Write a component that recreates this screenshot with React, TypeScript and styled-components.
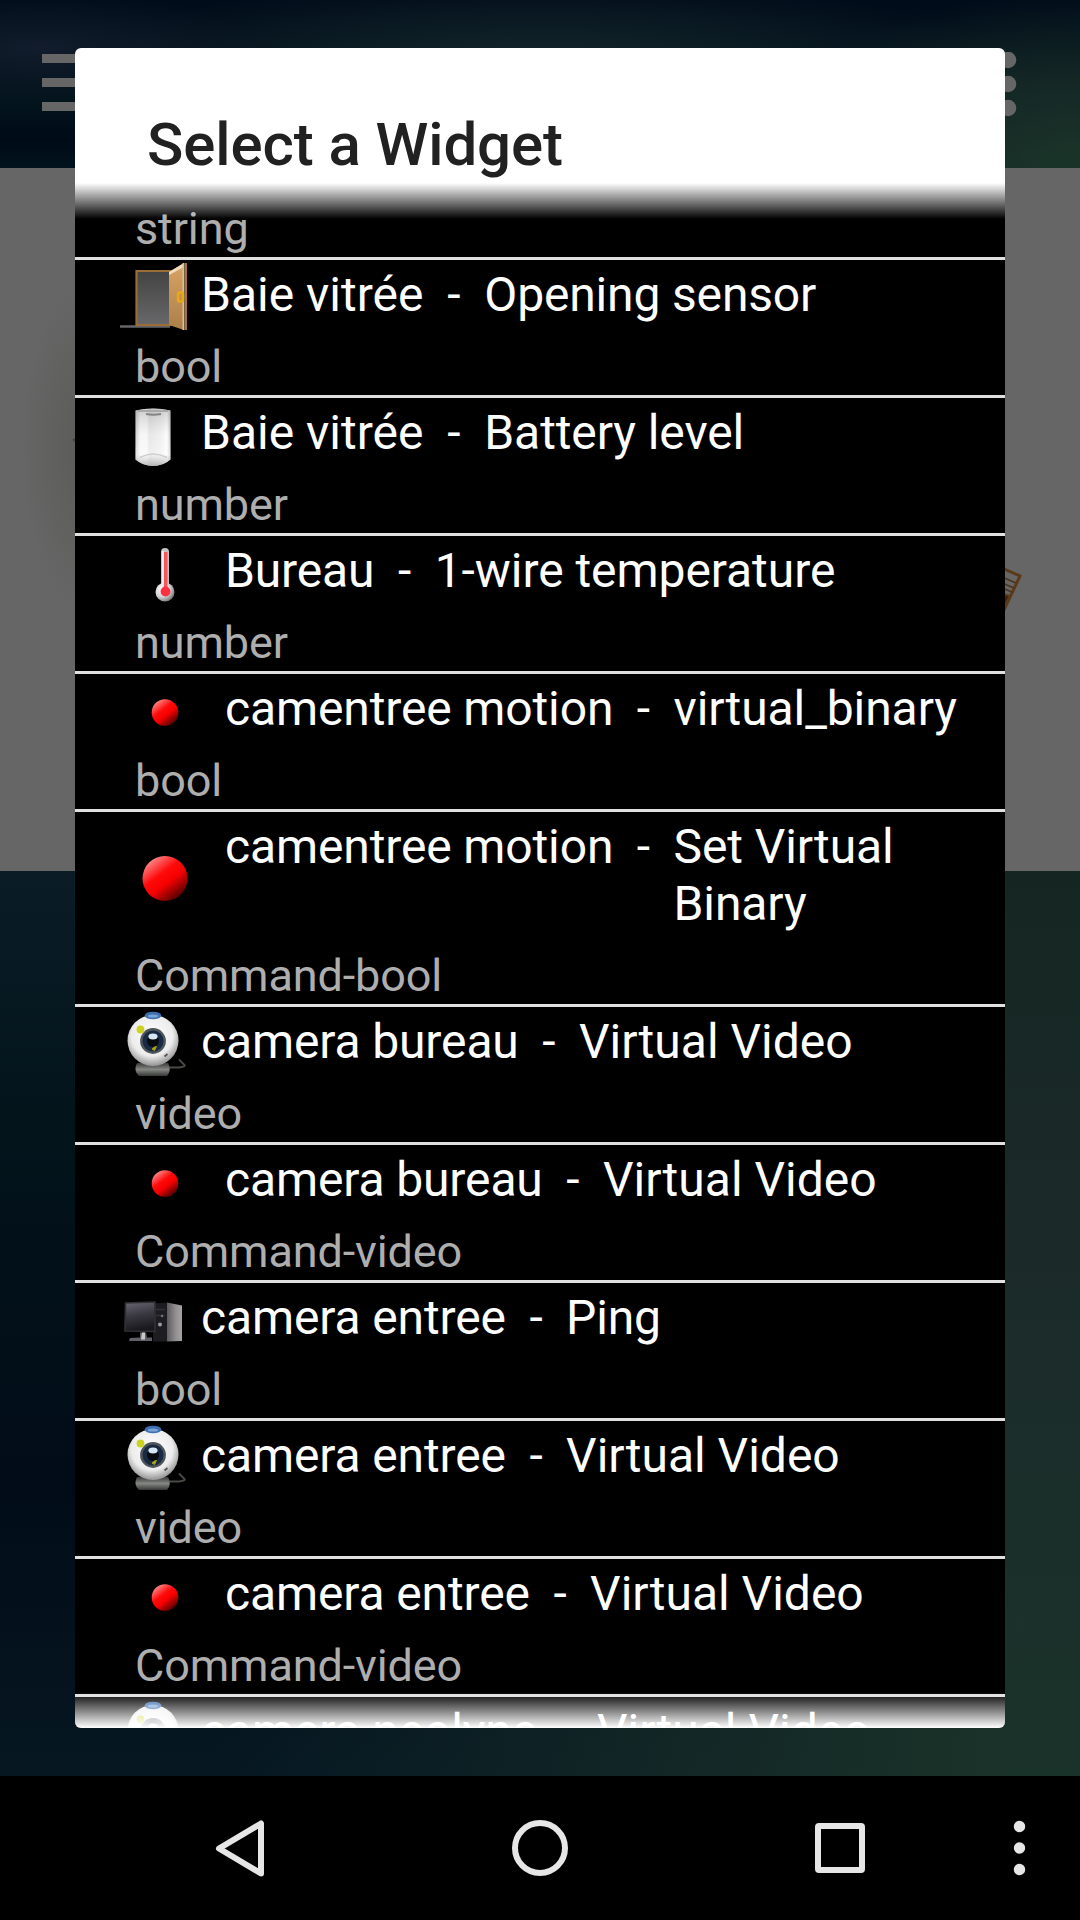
import React from "react";
import styled, { createGlobalStyle } from "styled-components";

const Global = createGlobalStyle`
  body { margin: 0; background: #000; font-family: Roboto, "Liberation Sans", sans-serif; }
`;

const Screen = styled.div`
  width: 1080px;
  height: 1920px;
  display: grid;
  grid-template-rows: 168px 703px 905px 144px;
  overflow: hidden;
  position: relative;
`;

const TopBar = styled.header`
  display: flex;
  justify-content: space-between;
  align-items: flex-start;
  padding: 52px 63px 0 42px;
  background:
    radial-gradient(ellipse 220px 55px at 40px 48px, #121c2c, transparent),
    radial-gradient(ellipse 460px 80px at 540px 60px, #14262a, transparent),
    radial-gradient(ellipse 340px 175px at 100% 100%, #1a3329 10%, rgba(26, 46, 40, 0.75) 50%, transparent),
    linear-gradient(to bottom, #000c1a, #03141c 60%, #000b18 84%, #02131c);
`;

const Canvas = styled.main`
  background: radial-gradient(ellipse 76px 170px at 96px 280px, #595957, #666);
  display: flex;
  justify-content: space-between;
`;

const Wallpaper = styled.div`
  background:
    linear-gradient(to bottom, #152622, #1b2a29 40%, #1b2d2a 60%, #1a332a) right / 76px 100% no-repeat,
    linear-gradient(to right, rgba(26, 50, 41, 0) 20%, #1a3229 92%),
    linear-gradient(to bottom, #0a1c26 0, #03141b 28%, #020f18 52%, #020c19 68%, #061722 100%);
`;

const NavBar = styled.nav`
  background: #000;
  display: block;
`;

const Overlay = styled.div`
  position: absolute;
  left: 75px;
  top: 48px;
`;

const Dialog = styled.section`
  width: 930px;
  height: 1680px;
  display: flex;
  flex-direction: column;
  background: #fff;
  border-radius: 6px;
  overflow: hidden;
`;

const DialogTitle = styled.h1`
  flex: none;
  box-sizing: border-box;
  height: 135px;
  margin: 0;
  padding: 61px 72px 0;
  font-size: 60px;
  line-height: 72px;
  font-weight: 500;
  letter-spacing: -0.1px;
  color: #212121;
`;

const Viewport = styled.div`
  flex: 1;
  min-height: 0;
  overflow: hidden;
  background: #000;
  position: relative;
`;

const Fade = styled.div<{ $edge: "top" | "bottom" }>`
  position: absolute;
  left: 0;
  right: 0;
  height: 36px;
  ${(p) => p.$edge}: 0;
  background: linear-gradient(to ${(p) => p.$edge}, rgba(255, 255, 255, 0), #fff);
`;

const List = styled.ul`
  margin: -61px 0 0;
  padding: 0;
  list-style: none;
`;

const Row = styled.li`
  display: flex;
  flex-direction: column;
  border-bottom: 3px solid #e0e0e0;
`;

const Head = styled.div`
  display: flex;
  min-height: 75px;
  padding: 0 42px;
`;

const IconBox = styled.div<{ $size: number }>`
  width: ${(p) => p.$size}px;
  flex: none;
  margin-right: 12px;
  display: flex;
  align-items: ${(p) => (p.$size === 72 ? "flex-start" : "center")};
  svg {
    display: block;
    filter: blur(0.6px);
  }
`;

const Label = styled.span<{ $tracking?: number }>`
  padding: 6px 0 12px;
  font-size: 48px;
  line-height: 57px;
  letter-spacing: ${(p) => p.$tracking ?? -0.13}px;
  color: #fff;
  white-space: pre;
`;

const Feature = styled(Label)`
  flex: 1;
  min-width: 0;
  white-space: normal;
`;

const Kind = styled.div`
  height: 60px;
  padding-left: 60px;
  font-size: 45px;
  line-height: 64px;
  letter-spacing: -0.12px;
  color: #aeaeae;
`;

const Door = () => (
  <svg width="72" height="72" viewBox="0 0 72 72">
    <defs>
      <linearGradient id="dk" x1="0" y1="0" x2="0" y2="1"><stop offset="0" stopColor="#434343" /><stop offset="1" stopColor="#68686a" /></linearGradient>
      <linearGradient id="wd" x1="0" y1="0" x2="0" y2="1"><stop offset="0" stopColor="#d9a364" /><stop offset="1" stopColor="#ab7f49" /></linearGradient>
    </defs>
    <path d="M3 66.500h50" stroke="#666668" strokeWidth="2.500" />
    <path d="M19.500 65V11h34v54z" fill="url(#dk)" stroke="#9c6c36" strokeWidth="2.200" />
    <path d="M52 12 67 3v67L52 65z" fill="url(#wd)" />
    <path d="M52 12 67 3v4L52 15z" fill="#f2dcc0" />
    <path d="M66.500 3v67" stroke="#e2bd90" strokeWidth="2" />
    <path d="M69 3v67" stroke="#a8743c" strokeWidth="2" />
    <rect x="61" y="32.500" width="5" height="9" rx="1.500" fill="none" stroke="#eba815" strokeWidth="2.400" />
  </svg>
);

const Battery = () => (
  <svg width="72" height="72" viewBox="0 -2.500 72 72">
    <defs>
      <linearGradient id="bt"><stop offset="0" stopColor="#b0b0b0" /><stop offset=".14" stopColor="#f1f1f1" /><stop offset=".32" stopColor="#f0f0f0" /><stop offset=".4" stopColor="#d6d6d6" /><stop offset=".75" stopColor="#e8e8e8" /><stop offset=".9" stopColor="#fafafa" /><stop offset="1" stopColor="#a8a8a8" /></linearGradient>
      <linearGradient id="bs" x1="0" y1="0" x2="0" y2="1"><stop offset="0" stopColor="#aaa" stopOpacity=".5" /><stop offset=".45" stopColor="#fff" stopOpacity=".4" /><stop offset=".8" stopColor="#fff" stopOpacity=".6" /><stop offset="1" stopColor="#aaa" stopOpacity=".8" /></linearGradient>
    </defs>
    <path d="M18.500 10Q36 6 53.500 10V59Q46 65.500 36 65.500T18.500 59z" fill="url(#bt)" />
    <path d="M18.500 10Q36 6 53.500 10V59Q46 65.500 36 65.500T18.500 59z" fill="url(#bs)" />
    <path d="M21 10.500h30" stroke="#aaa" strokeWidth="2" />
    <path d="M29 13.500q7 1.500 15 0" stroke="#858585" strokeWidth="2" fill="none" />
    <path d="M23 57q13-7 27 0" stroke="#cdcdcd" strokeWidth="1.500" fill="none" />
  </svg>
);

const Thermometer = () => (
  <svg width="96" height="74" viewBox="0 0 96 74">
    <defs>
      <radialGradient id="tb" cx=".35" cy=".35" r=".7"><stop offset="0" stopColor="#fff" /><stop offset=".6" stopColor="#d0d0d0" /><stop offset="1" stopColor="#777" /></radialGradient>
    </defs>
    <path d="M48 15v38" stroke="#c4c4c4" strokeWidth="8" strokeLinecap="round" />
    <circle cx="48" cy="55" r="9.500" fill="url(#tb)" />
    <path d="M46 14v34" stroke="#f0f0f0" strokeWidth="2" />
    <path d="M48.700 15v38" stroke="#f4565c" strokeWidth="3.600" />
    <circle cx="48.500" cy="54.500" r="4.900" fill="#fb3040" />
  </svg>
);

const Ball = ({ r }: { r: number }) => (
  <svg width="96" height="74" viewBox="0 0 96 74">
    <defs>
      <linearGradient id="bl" x1=".15" y1=".08" x2=".8" y2=".95"><stop offset="0" stopColor="#ff8f8f" /><stop offset=".38" stopColor="#ff0a0a" /><stop offset=".6" stopColor="#f60000" /><stop offset="1" stopColor="#4a0000" /></linearGradient>
    </defs>
    <circle cx="48" cy="37.500" r={r} fill="url(#bl)" />
  </svg>
);

const Webcam = () => (
  <svg width="72" height="72" viewBox="0 -1 72 72">
    <defs>
      <linearGradient id="wb" x1="0" y1="0" x2="0" y2="1"><stop offset="0" stopColor="#3a3a3a" /><stop offset=".5" stopColor="#858783" /><stop offset="1" stopColor="#353735" /></linearGradient>
      <radialGradient id="ws" cx=".48" cy=".4" r=".58"><stop offset="0" stopColor="#fff" /><stop offset=".7" stopColor="#ececec" /><stop offset="1" stopColor="#9c9c9c" /></radialGradient>
    </defs>
    <path d="M50 59.500h12q8-1 5-3l-5-5" fill="none" stroke="#4a4b46" strokeWidth="1.800" />
    <path d="M20 55h31q4 7-1 13H22q-6-5-2-13z" fill="url(#wb)" />
    <circle cx="36" cy="32.500" r="25.500" fill="url(#ws)" />
    <ellipse cx="36" cy="7.500" rx="8.300" ry="3.800" fill="#3f70b2" />
    <ellipse cx="36" cy="8" rx="5" ry="1.500" fill="#79a5d8" />
    <circle cx="36" cy="33" r="12.900" fill="#4e555b" />
    <circle cx="36" cy="33" r="10.500" fill="#1a2a42" />
    <circle cx="36" cy="33" r="6" fill="#080b10" />
    <ellipse cx="36" cy="28.500" rx="4.600" ry="3" fill="#d7e6f5" />
    <path d="M35 41l2.500 1.500 2-4-2 .5z" fill="#b3ac18" stroke="#a39b1a" strokeWidth="1" />
    <circle cx="23.500" cy="21.500" r="3.900" fill="#cbd222" />
    <path d="M47.500 48.500l3-2.500" stroke="#555" strokeWidth="1.800" />
  </svg>
);

const Computer = () => (
  <svg width="72" height="72" viewBox="0 -2.500 72 72">
    <defs>
      <linearGradient id="sc" x1="0" y1="0" x2=".2" y2="1"><stop offset="0" stopColor="#6a6872" /><stop offset=".5" stopColor="#3a3941" /><stop offset="1" stopColor="#18181d" /></linearGradient>
      <linearGradient id="cs"><stop offset="0" stopColor="#5c5a5c" /><stop offset=".6" stopColor="#929092" /><stop offset="1" stopColor="#a5a3a4" /></linearGradient>
    </defs>
    <path d="M36 18 50 17v39H36z" fill="#1d1d21" />
    <path d="M50 17 65 20v35.500L50 56z" fill="url(#cs)" />
    <path d="M39 24h9M39 30h9" stroke="#323238" strokeWidth="1.500" />
    <circle cx="43" cy="39" r="2" fill="#9a9aa2" />
    <circle cx="45" cy="30.500" r="1.200" fill="#777" />
    <path d="M8.500 17.500 38 16.500V46L8 45.500z" fill="url(#sc)" stroke="#303036" strokeWidth="1.600" />
    <path d="M23 47h6l1 5h5v3.500H12l1-3 10-.5z" fill="#606066" />
    <path d="M25 47h3v7h-4z" fill="#c8c8cc" />
  </svg>
);

const icons = {
  door: { size: 72, art: <Door /> },
  battery: { size: 72, art: <Battery /> },
  thermometer: { size: 96, art: <Thermometer /> },
  dot: { size: 96, art: <Ball r={13.3} /> },
  ball: { size: 96, art: <Ball r={22.5} /> },
  webcam: { size: 72, art: <Webcam /> },
  computer: { size: 72, art: <Computer /> },
};

type Item = {
  icon?: keyof typeof icons;
  device?: string;
  feature?: string;
  kind: string;
  deviceTracking?: number;
  featureTracking?: number;
};

const items: Item[] = [
  { kind: "string" },
  { icon: "door", device: "Baie vitrée", feature: "Opening sensor", kind: "bool", deviceTracking: 0, featureTracking: -0.16 },
  { icon: "battery", device: "Baie vitrée", feature: "Battery level", kind: "number", deviceTracking: 0, featureTracking: -0.09 },
  { icon: "thermometer", device: "Bureau", feature: "1-wire temperature", kind: "number", featureTracking: -0.06 },
  { icon: "dot", device: "camentree motion", feature: "virtual_binary", kind: "bool", featureTracking: -0.09 },
  { icon: "ball", device: "camentree motion", feature: "Set Virtual Binary", kind: "Command-bool", featureTracking: -0.1 },
  { icon: "webcam", device: "camera bureau", feature: "Virtual Video", kind: "video", featureTracking: 0 },
  { icon: "dot", device: "camera bureau", feature: "Virtual Video", kind: "Command-video", featureTracking: 0 },
  { icon: "computer", device: "camera entree", feature: "Ping", kind: "bool", featureTracking: -0.2 },
  { icon: "webcam", device: "camera entree", feature: "Virtual Video", kind: "video", featureTracking: 0 },
  { icon: "dot", device: "camera entree", feature: "Virtual Video", kind: "Command-video", featureTracking: 0 },
  { icon: "webcam", device: "camera neolync", feature: "Virtual Video", kind: "video", featureTracking: 0 },
];

export default function App() {
  return (
    <>
      <Global />
      <Screen>
        <TopBar>
          <svg width="72" height="66" viewBox="0 0 72 66" fill="#666">
            <path d="M0 2h72v9H0zM0 26h72v9H0zM0 50h72v9H0z" />
          </svg>
          <svg width="18" height="66" viewBox="0 0 18 66" fill="#666">
            <circle cx="9" cy="8" r="8.300" /><circle cx="9" cy="32" r="8.300" /><circle cx="9" cy="56" r="8.300" />
          </svg>
        </TopBar>
        <Canvas>
          <svg width="80" height="300" viewBox="0 0 80 300">
            <path d="M72 271.500l3-1.500h5v10l-4-5z" fill="#444" />
          </svg>
          <svg width="90" height="460" viewBox="0 0 90 460" fill="none" stroke="#5b3a1a" strokeWidth="2">
            <path d="M12 400 30 408 12 446" strokeWidth="3" />
            <path d="M12 409l14 6M12 415l12 5M12 420l10 4" stroke="#4e321a" strokeWidth="1.500" />
            <path d="M10 425l10 3-8 14z" fill="#3c2210" />
          </svg>
        </Canvas>
        <Wallpaper />
        <NavBar>
          <svg width="1080" height="144" viewBox="0 0 1080 144" fill="none" stroke="#e6e6e6" strokeWidth="6" strokeLinejoin="round">
            <path d="M261 47.500v50L219 72.500z" />
            <circle cx="540" cy="72" r="25" />
            <rect x="818" y="50" width="44" height="44" rx="1" />
            <g fill="#e6e6e6" stroke="none">
              <circle cx="1019.500" cy="50.500" r="5.700" /><circle cx="1019.500" cy="72" r="5.700" /><circle cx="1019.500" cy="93.500" r="5.700" />
            </g>
          </svg>
        </NavBar>
        <Overlay>
          <Dialog>
            <DialogTitle>Select a Widget</DialogTitle>
            <Viewport>
              <List>
                {items.map((it, i) => (
                  <Row key={i}>
                    <Head>
                      {it.icon && <IconBox $size={icons[it.icon].size}>{icons[it.icon].art}</IconBox>}
                      {it.device && <Label $tracking={it.deviceTracking}>{it.device + "  -  "}</Label>}
                      {it.feature && <Feature $tracking={it.featureTracking}>{it.feature}</Feature>}
                    </Head>
                    <Kind>{it.kind}</Kind>
                  </Row>
                ))}
              </List>
              <Fade $edge="top" />
              <Fade $edge="bottom" />
            </Viewport>
          </Dialog>
        </Overlay>
      </Screen>
    </>
  );
}
